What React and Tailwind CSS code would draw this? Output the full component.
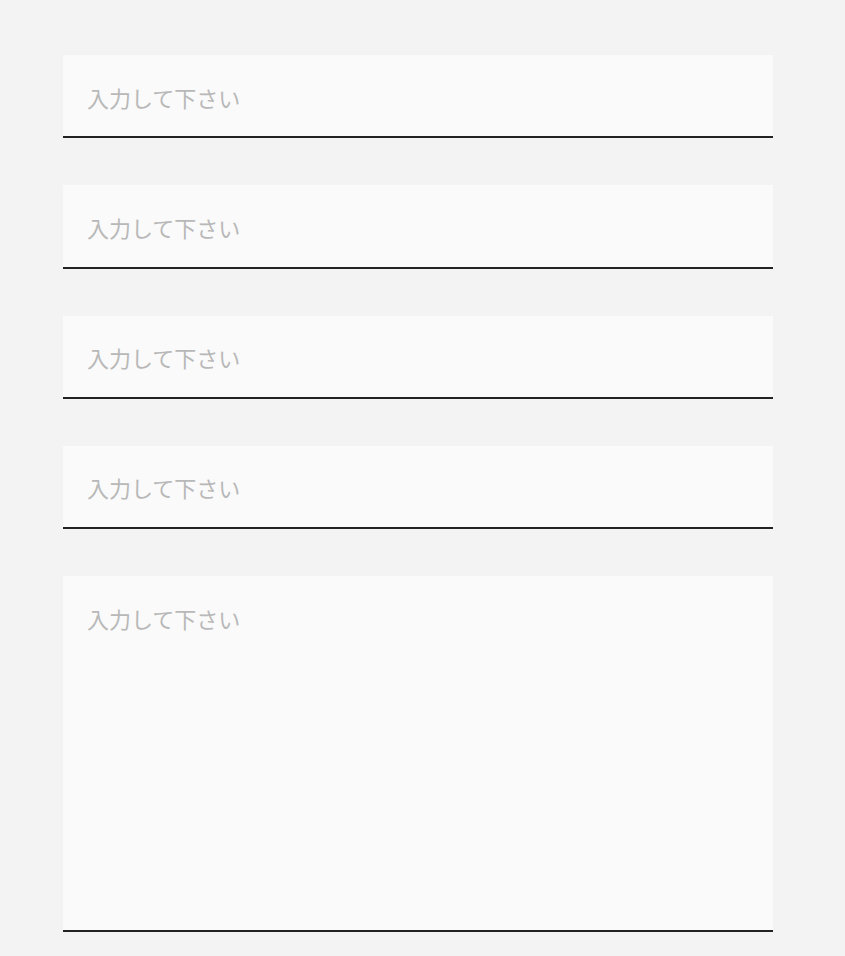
import React from 'react';

const fieldClass =
  'block w-full bg-[#fafafa] border-0 border-b-2 border-[#222222] px-6 text-[22px] text-[#333333] outline-none placeholder:text-[#b8b8b8]';

const App = () => {
  return (
    <div
      className="min-h-[956px] w-full bg-[#f3f3f3] pt-[55px] pl-[63px] pr-[72px]"
      style={{ fontFamily: '"Noto Sans CJK JP", "Noto Sans", sans-serif' }}
    >
      <div className="flex w-[710px] flex-col gap-[47px]">
        {[0, 1, 2, 3].map((i) => (
          <input key={i} type="text" placeholder="入力して下さい" className={`${fieldClass} h-[83.25px] pt-[2px]`} />
        ))}
        <textarea
          placeholder="入力して下さい"
          className={`${fieldClass} h-[356px] resize-none pt-[26.5px] leading-[1.4]`}
        />
      </div>
    </div>
  );
};

export default App;
